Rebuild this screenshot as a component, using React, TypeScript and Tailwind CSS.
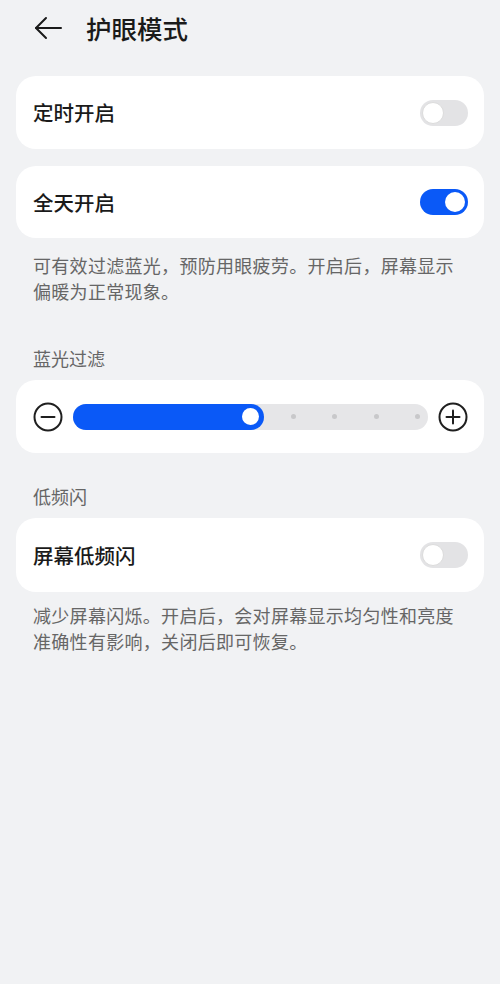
import React from "react";

const font = { fontFamily: '"Noto Sans CJK SC", "Noto Sans", sans-serif' };

function Toggle({ on }: { on: boolean }) {
  return on ? (
    <div className="w-[48px] h-[26px] rounded-full bg-[#0a59f7] flex items-center justify-end pr-[3px]">
      <div className="w-[20px] h-[20px] rounded-full bg-white" />
    </div>
  ) : (
    <div className="w-[48px] h-[26px] rounded-full bg-[#e3e3e5] flex items-center pl-[2px]">
      <div className="w-[22px] h-[22px] rounded-full bg-white border border-[#dcdcdc]" />
    </div>
  );
}

function CircleIcon({ plus }: { plus?: boolean }) {
  return (
    <svg width="30" height="30" viewBox="0 0 30 30" fill="none" stroke="#1f1f1f" strokeWidth="2" strokeLinecap="round">
      <circle cx="15" cy="15" r="13.5" />
      <line x1="8.5" y1="15" x2="21.5" y2="15" />
      {plus && <line x1="15" y1="8.5" x2="15" y2="21.5" />}
    </svg>
  );
}

export default function App() {
  return (
    <div className="w-[500px] h-[984px] bg-[#f1f2f4] flex flex-col" style={font}>
      <div className="h-[56px] flex items-center pl-[34px]">
        <svg width="28" height="24" viewBox="0 0 28 24" fill="none" stroke="#1a1a1a" strokeWidth="2" strokeLinecap="round" strokeLinejoin="round">
          <path d="M12 2 L2 12 L12 22" />
          <path d="M2 12 H27" />
        </svg>
        <div className="ml-[24px] text-[25.5px] font-medium text-[#1a1a1a] leading-none">护眼模式</div>
      </div>

      <div className="mt-[20px] mx-4 h-[73px] rounded-[20px] bg-white flex items-center justify-between pl-[17px] pr-[16px]">
        <span className="text-[20.5px] font-medium text-[#1a1a1a]">定时开启</span>
        <Toggle on={false} />
      </div>

      <div className="mt-[17px] mx-4 h-[72px] rounded-[20px] bg-white flex items-center justify-between pl-[17px] pr-[16px]">
        <span className="text-[20.5px] font-medium text-[#1a1a1a]">全天开启</span>
        <Toggle on={true} />
      </div>

      <div className="mt-[14px] px-[33px] text-[18px] tracking-[0.3px] leading-[26px] text-[#666666] whitespace-nowrap">
        可有效过滤蓝光，预防用眼疲劳。开启后，屏幕显示
        <br />
        偏暖为正常现象。
      </div>

      <div className="mt-[41px] px-[33px] text-[18px] leading-[26px] text-[#666666]">蓝光过滤</div>

      <div className="mt-[9px] mx-4 h-[73px] rounded-[20px] bg-white flex items-center pl-[17px] pr-[16px] gap-[10px]">
        <CircleIcon />
        <div className="flex-1 h-[26px] rounded-full bg-[#e6e6e8] flex items-center">
          <div className="w-[191px] h-[26px] rounded-full bg-[#0a59f7] flex items-center justify-end pr-[5px]">
            <div className="w-[17px] h-[17px] rounded-full bg-white" />
          </div>
          <div className="flex items-center ml-[26.5px] gap-[36.5px]">
            <div className="w-[5px] h-[5px] rounded-full bg-[#c8c8ca]" />
            <div className="w-[5px] h-[5px] rounded-full bg-[#c8c8ca]" />
            <div className="w-[5px] h-[5px] rounded-full bg-[#c8c8ca]" />
            <div className="w-[5px] h-[5px] rounded-full bg-[#c8c8ca]" />
          </div>
        </div>
        <CircleIcon plus />
      </div>

      <div className="mt-[30px] px-[33px] text-[18px] leading-[26px] text-[#666666]">低频闪</div>

      <div className="mt-[9px] mx-4 h-[74px] rounded-[20px] bg-white flex items-center justify-between pl-[17px] pr-[16px]">
        <span className="text-[20.5px] font-medium text-[#1a1a1a]">屏幕低频闪</span>
        <Toggle on={false} />
      </div>

      <div className="mt-[10px] px-[33px] text-[18px] tracking-[0.3px] leading-[26px] text-[#666666] whitespace-nowrap">
        减少屏幕闪烁。开启后，会对屏幕显示均匀性和亮度
        <br />
        准确性有影响，关闭后即可恢复。
      </div>
    </div>
  );
}
